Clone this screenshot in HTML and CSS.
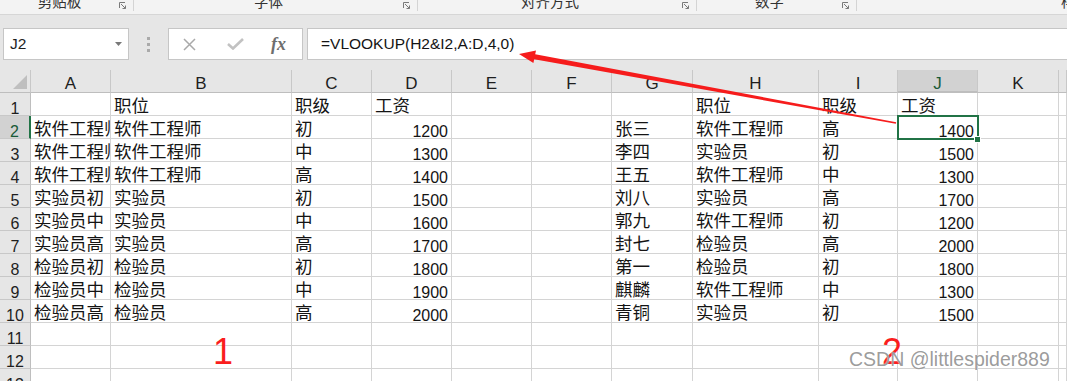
FILE: index.html
```html
<!DOCTYPE html>
<html>
<head>
    <meta charset="utf-8">
    <link rel="stylesheet" href="styles.css">
</head>
<body>
    <div id="app">
        <div class="ribbon">
            <div class="group g_clip">
                <span class="group_label">剪贴板</span>
                <svg class="launcher" width="7" height="7" viewBox="0 0 7 7"><path d="M0.5 6V0.5H6M2 2L6.5 6.5M3.5 6.5H6.5V3.5" fill="none" stroke="#7a7a7a" stroke-width="1"/></svg>
            </div>
            <div class="group g_font">
                <span class="group_label">字体</span>
                <svg class="launcher" width="7" height="7" viewBox="0 0 7 7"><path d="M0.5 6V0.5H6M2 2L6.5 6.5M3.5 6.5H6.5V3.5" fill="none" stroke="#7a7a7a" stroke-width="1"/></svg>
            </div>
            <div class="group g_align">
                <span class="group_label">对齐方式</span>
                <svg class="launcher" width="7" height="7" viewBox="0 0 7 7"><path d="M0.5 6V0.5H6M2 2L6.5 6.5M3.5 6.5H6.5V3.5" fill="none" stroke="#7a7a7a" stroke-width="1"/></svg>
            </div>
            <div class="group g_num">
                <span class="group_label">数字</span>
                <svg class="launcher" width="7" height="7" viewBox="0 0 7 7"><path d="M0.5 6V0.5H6M2 2L6.5 6.5M3.5 6.5H6.5V3.5" fill="none" stroke="#7a7a7a" stroke-width="1"/></svg>
            </div>
            <div class="group g_style">
                <span class="group_label last_label">样式</span>
            </div>
        </div>

        <div class="fbar">
            <div class="name_box">
                <span>J2</span>
                <svg class="drop" width="7" height="4" viewBox="0 0 7 4"><path d="M0 0H7L3.5 4Z" fill="#787878"/></svg>
            </div>
            <div class="grip"><i></i><i></i><i></i></div>
            <div class="fx_box">
                <svg class="fx_cancel" width="13" height="13" viewBox="0 0 13 13"><path d="M1 1L12 12M12 1L1 12" stroke="#a9a9a9" stroke-width="1.5"/></svg>
                <svg class="fx_ok" width="17" height="12" viewBox="0 0 17 12"><path d="M1 6L6 10.5L16 1" fill="none" stroke="#c2c2c2" stroke-width="2.6"/></svg>
                <span class="fx_label">fx</span>
            </div>
            <div class="formula">=VLOOKUP(H2&amp;I2,A:D,4,0)</div>
        </div>

        <div class="sheet">
            <div class="row head_row">
                <div class="corner"><svg width="31" height="22" viewBox="0 0 31 22"><path d="M27 5V19H13Z" fill="#bfbfbf"/></svg></div>
                <div class="ch">A</div><div class="ch">B</div><div class="ch">C</div><div class="ch">D</div><div class="ch">E</div><div class="ch">F</div>
                <div class="ch">G</div><div class="ch">H</div><div class="ch">I</div><div class="ch ch_sel">J</div><div class="ch">K</div><div class="ch"></div>
            </div>
            <div class="row">
                <div class="rh">1</div>
                <div class="c"></div><div class="c">职位</div><div class="c">职级</div><div class="c">工资</div><div class="c"></div><div class="c"></div>
                <div class="c"></div><div class="c">职位</div><div class="c">职级</div><div class="c">工资</div><div class="c"></div><div class="c"></div>
            </div>
            <div class="row">
                <div class="rh rh_sel">2</div>
                <div class="c">软件工程师初</div><div class="c">软件工程师</div><div class="c">初</div><div class="c n">1200</div><div class="c"></div><div class="c"></div>
                <div class="c">张三</div><div class="c">软件工程师</div><div class="c">高</div><div class="c n active">1400</div><div class="c"></div><div class="c"></div>
            </div>
            <div class="row">
                <div class="rh">3</div>
                <div class="c">软件工程师中</div><div class="c">软件工程师</div><div class="c">中</div><div class="c n">1300</div><div class="c"></div><div class="c"></div>
                <div class="c">李四</div><div class="c">实验员</div><div class="c">初</div><div class="c n">1500</div><div class="c"></div><div class="c"></div>
            </div>
            <div class="row">
                <div class="rh">4</div>
                <div class="c">软件工程师高</div><div class="c">软件工程师</div><div class="c">高</div><div class="c n">1400</div><div class="c"></div><div class="c"></div>
                <div class="c">王五</div><div class="c">软件工程师</div><div class="c">中</div><div class="c n">1300</div><div class="c"></div><div class="c"></div>
            </div>
            <div class="row">
                <div class="rh">5</div>
                <div class="c">实验员初</div><div class="c">实验员</div><div class="c">初</div><div class="c n">1500</div><div class="c"></div><div class="c"></div>
                <div class="c">刘八</div><div class="c">实验员</div><div class="c">高</div><div class="c n">1700</div><div class="c"></div><div class="c"></div>
            </div>
            <div class="row">
                <div class="rh">6</div>
                <div class="c">实验员中</div><div class="c">实验员</div><div class="c">中</div><div class="c n">1600</div><div class="c"></div><div class="c"></div>
                <div class="c">郭九</div><div class="c">软件工程师</div><div class="c">初</div><div class="c n">1200</div><div class="c"></div><div class="c"></div>
            </div>
            <div class="row">
                <div class="rh">7</div>
                <div class="c">实验员高</div><div class="c">实验员</div><div class="c">高</div><div class="c n">1700</div><div class="c"></div><div class="c"></div>
                <div class="c">封七</div><div class="c">检验员</div><div class="c">高</div><div class="c n">2000</div><div class="c"></div><div class="c"></div>
            </div>
            <div class="row">
                <div class="rh">8</div>
                <div class="c">检验员初</div><div class="c">检验员</div><div class="c">初</div><div class="c n">1800</div><div class="c"></div><div class="c"></div>
                <div class="c">第一</div><div class="c">检验员</div><div class="c">初</div><div class="c n">1800</div><div class="c"></div><div class="c"></div>
            </div>
            <div class="row">
                <div class="rh">9</div>
                <div class="c">检验员中</div><div class="c">检验员</div><div class="c">中</div><div class="c n">1900</div><div class="c"></div><div class="c"></div>
                <div class="c">麒麟</div><div class="c">软件工程师</div><div class="c">中</div><div class="c n">1300</div><div class="c"></div><div class="c"></div>
            </div>
            <div class="row">
                <div class="rh">10</div>
                <div class="c">检验员高</div><div class="c">检验员</div><div class="c">高</div><div class="c n">2000</div><div class="c"></div><div class="c"></div>
                <div class="c">青铜</div><div class="c">实验员</div><div class="c">初</div><div class="c n">1500</div><div class="c"></div><div class="c"></div>
            </div>
            <div class="row">
                <div class="rh">11</div>
                <div class="c"></div><div class="c"></div><div class="c"></div><div class="c"></div><div class="c"></div><div class="c"></div>
                <div class="c"></div><div class="c"></div><div class="c"></div><div class="c"></div><div class="c"></div><div class="c"></div>
            </div>
            <div class="row">
                <div class="rh">12</div>
                <div class="c"></div><div class="c"></div><div class="c"></div><div class="c"></div><div class="c"></div><div class="c"></div>
                <div class="c"></div><div class="c"></div><div class="c"></div><div class="c"></div><div class="c"></div><div class="c"></div>
            </div>
            <div class="row">
                <div class="rh">13</div>
                <div class="c"></div><div class="c"></div><div class="c"></div><div class="c"></div><div class="c"></div><div class="c"></div>
                <div class="c"></div><div class="c"></div><div class="c"></div><div class="c"></div><div class="c"></div><div class="c"></div>
            </div>
        </div>

        <!-- annotations drawn over the screenshot -->
        <svg class="arrow" width="1067" height="381" viewBox="0 0 1067 381">
            <path d="M896.2 122.2L535.2 54.3L536 50.6L519 54L533.4 63L534.2 59.3L895.8 123.8Z" fill="#f61c1c"/>
        </svg>
        <div class="note note_one">1</div>
        <div class="note note_two">2</div>
        <div class="watermark">CSDN @littlespider889</div>
    </div>
</body>
</html>
```

FILE: styles.css
```css
html, body {
    margin: 0;
    padding: 0;
    width: 100%;
    height: 100%;
    overflow: hidden;
    background-color: white;
}
#app {
    position: relative;
    width: 1067px;
    height: 381px;
    overflow: hidden;
    font-family: "Liberation Sans", "Noto Sans CJK SC", sans-serif;
}

/* ribbon group labels, cut at the top */
.ribbon {
    display: flex;
    height: 14px;
    background-color: rgb(243,243,243);
    border-bottom: 1px solid rgb(214,214,214);
    overflow: hidden;
}
.group {
    display: flex;
    align-items: flex-start;
    flex-shrink: 0;
    height: 11px;
    box-sizing: border-box;
    border-right: 1px solid rgb(212,212,212);
}
.g_clip {
    width: 134px;
}
.g_font {
    width: 284px;
}
.g_align {
    width: 279px;
}
.g_num {
    width: 160px;
}
.g_style {
    width: 240px;
    border-right: none;
}
.group_label {
    flex-grow: 1;
    margin-top: -7px;
    text-align: center;
    font-family: "Noto Sans CJK SC", sans-serif;
    font-size: 14.5px;
    line-height: 16px;
    color: rgb(50,50,50);
    white-space: nowrap;
}
.last_label {
    text-align: left;
    padding-left: 204px;
}
.launcher {
    margin: 2px 7px 0 0;
    flex-shrink: 0;
}

/* name box and formula bar */
.fbar {
    display: flex;
    height: 32px;
    padding: 13px 0 10px 3px;
    background-color: rgb(230,230,230);
}
.name_box {
    display: flex;
    align-items: center;
    width: 126px;
    box-sizing: border-box;
    padding: 0 6px 0 6px;
    background-color: white;
    border: 1px solid rgb(198,198,198);
    font-size: 15.5px;
    color: rgb(30,30,30);
}
.drop {
    margin-left: auto;
}
.grip {
    display: flex;
    flex-direction: column;
    align-items: center;
    justify-content: center;
    gap: 3px;
    width: 39px;
}
.grip i {
    display: block;
    width: 3px;
    height: 3px;
    background-color: rgb(170,170,170);
}
.fx_box {
    display: flex;
    align-items: center;
    width: 135px;
    box-sizing: border-box;
    padding-left: 14px;
    background-color: white;
    border: 1px solid rgb(198,198,198);
}
.fx_ok {
    margin-left: 31px;
}
.fx_label {
    margin-left: 27px;
    font-family: "Liberation Serif", serif;
    font-style: italic;
    font-weight: bold;
    font-size: 18px;
    color: rgb(110,110,110);
}
.formula {
    flex-grow: 1;
    display: flex;
    align-items: center;
    margin: 0 -2px 0 4px;
    padding-left: 13px;
    background-color: white;
    border: 1px solid rgb(198,198,198);
    font-size: 15.5px;
    color: rgb(20,20,20);
    white-space: nowrap;
}

/* the grid */
.sheet {
    display: flex;
    flex-direction: column;
}
.row {
    display: grid;
    grid-template-columns: 31px 80px 181px 80px 80px 80px 80px 81px 126px 79px 80px 81px 1fr;
    grid-template-rows: 23px;
    height: 23px;
    flex-shrink: 0;
}
.row > div {
    box-sizing: border-box;
    overflow: hidden;
    white-space: nowrap;
    min-height: 0;
}
.corner, .ch, .rh {
    background-color: rgb(230,230,230);
    border-right: 1px solid rgb(200,200,200);
    border-bottom: 1px solid rgb(200,200,200);
    color: rgb(30,30,30);
}
.head_row .corner, .head_row .ch {
    border-bottom-color: rgb(190,190,190);
}
.ch {
    text-align: center;
    font-size: 17px;
    line-height: 27px;
}
.ch_sel {
    background-color: rgb(210,210,210);
    border-bottom: 2px solid rgb(33,115,70);
    color: rgb(25,90,55);
}
.rh {
    text-align: center;
    font-size: 16px;
    line-height: 31px;
    border-right-color: rgb(190,190,190);
}
.rh_sel {
    background-color: rgb(210,210,210);
    border-right: 2px solid rgb(33,115,70);
    color: rgb(25,90,55);
}
.c {
    padding: 0 3px;
    border-right: 1px solid rgb(212,212,212);
    border-bottom: 1px solid rgb(212,212,212);
    font-family: "Noto Sans CJK SC", sans-serif;
    font-size: 17.5px;
    line-height: 24px;
    color: rgb(20,20,20);
}
.n {
    text-align: right;
    font-family: "Liberation Sans", sans-serif;
    font-size: 16px;
    line-height: 31px;
}
.row > .active {
    position: relative;
    overflow: visible;
    z-index: 2;
}
.active::before {
    content: "";
    position: absolute;
    top: -1px;
    left: -1px;
    right: -2px;
    bottom: -2px;
    border: 2px solid rgb(33,115,70);
}
.active::after {
    content: "";
    position: absolute;
    right: -4px;
    bottom: -5px;
    width: 5px;
    height: 5px;
    background-color: rgb(33,115,70);
    border: 1px solid white;
}

/* annotations */
.arrow {
    position: absolute;
    top: 0;
    left: 0;
    z-index: 5;
}
.note {
    position: absolute;
    top: 334px;
    z-index: 5;
    font-size: 36px;
    line-height: 36px;
    color: rgb(250,30,30);
}
.note_one {
    left: 213px;
}
.note_two {
    left: 882px;
}
.watermark {
    position: absolute;
    top: 349px;
    left: 849px;
    z-index: 6;
    font-size: 19.5px;
    line-height: 20px;
    color: rgba(130,130,130,0.8);
    text-shadow: 0 0 1px white;
    white-space: nowrap;
}
```
